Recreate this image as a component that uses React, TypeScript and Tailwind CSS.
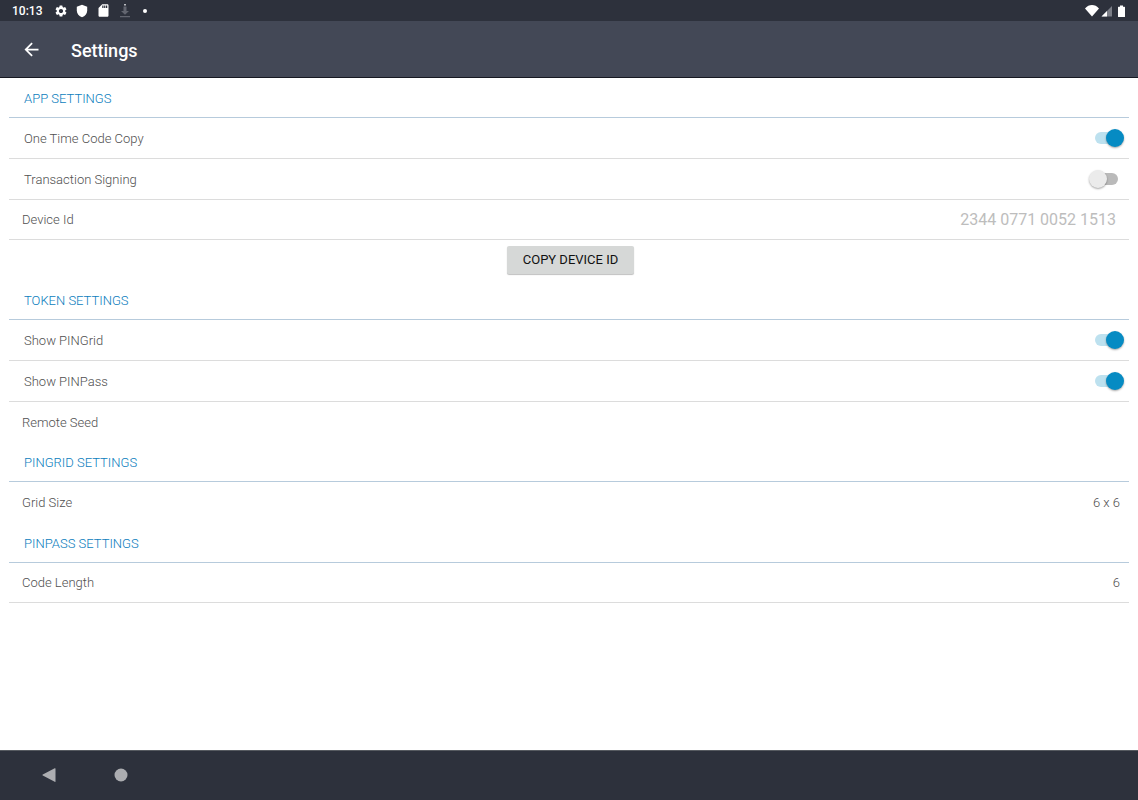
import { useState, type ReactNode } from "react";
import { MdArrowBack, MdSdCard, MdSettings } from "react-icons/md";

function StatusBar() {
  return (
    <div className="flex h-[21px] items-center justify-between bg-[#2d313c] px-3 text-white">
      <div className="flex items-center">
        <span className="w-[42px] text-[12px] leading-4 font-medium">10:13</span>
        <MdSettings className="size-[14px]" aria-hidden="true" />
        <svg className="ml-[7px] size-[14px]" viewBox="0 0 14 14" fill="currentColor" aria-hidden="true">
          <path d="M7 .7 1.8 2.8v3.7c0 3.200 2.200 5.800 5.200 6.800 3-1 5.200-3.600 5.200-6.800V2.800z" />
        </svg>
        <MdSdCard className="ml-[7px] size-[15px]" aria-hidden="true" />
        <svg className="ml-[7px] size-[14px] text-[#62656f]" viewBox="0 0 14 14" fill="currentColor" aria-hidden="true">
          <path d="M5.500 2.500h3V7h2.500L7 10.800 3 7h2.500zM2 12h10v1.300H2z" />
          <path d="M6 0h2v1.500H6z" fill="#b9bbc0" />
        </svg>
        <span className="ml-[11px] size-1 rounded-full bg-white" />
      </div>
      <svg className="h-[14px] w-[41px]" viewBox="0 0 41 14" fill="#fff" aria-hidden="true">
        <path d="M0 4.500C4-.1 10-.1 14 4.500L7 12.500z" />
        <path d="M27 2v10.500H16.500z" fill="#7b7e87" />
        <path d="M22 7v5.500h-5.500z" />
        <path d="M33.500 2.700h1.500V1.500h3v1.200h1.500q.5 0 .5.500v9.300q0 .5-.5.500h-6q-.5 0-.5-.5V3.200q0-.5.500-.5z" />
      </svg>
    </div>
  );
}

function SectionHeader({ children }: { children: ReactNode }) {
  return (
    <h2 className="flex h-10 items-center border-b border-[#b7cbdc] pt-0.5 pl-[15px] text-[#0b7dbd]">
      {children}
    </h2>
  );
}

function ToggleRow({ id, label, initial }: { id: string; label: string; initial: boolean }) {
  const [on, setOn] = useState(initial);
  return (
    <div className="flex h-[41px] items-center justify-between border-b border-[#dcdcdc] pr-1 pl-[15px]">
      <label htmlFor={id} className="pt-px">{label}</label>
      <span className="relative flex h-5 w-9 items-center">
        <input
          id={id}
          type="checkbox"
          role="switch"
          checked={on}
          onChange={(e) => setOn(e.target.checked)}
          className="peer absolute inset-0 z-10 cursor-pointer opacity-0"
        />
        <span className="ml-[2px] h-3 w-[27px] rounded-full bg-[#bababa] peer-checked:ml-[6px] peer-checked:bg-[#bde1ef]" />
        <span className="absolute left-0 size-[18px] rounded-full bg-[#ebebeb] shadow-[0_1px_2px_rgba(0,0,0,0.35)] peer-checked:left-[17px] peer-checked:bg-[#068bc3]" />
      </span>
    </div>
  );
}

function ValueRow({ label, children, line = true }: { label: string; children?: ReactNode; line?: boolean }) {
  return (
    <div className={`flex h-10 items-center justify-between pt-px pr-[9px] pl-[13px] ${line ? "border-b border-[#dcdcdc]" : ""}`}>
      <span>{label}</span>
      {children}
    </div>
  );
}

export default function App() {
  return (
    <div className="flex min-h-screen flex-col bg-white font-[Roboto,sans-serif] text-[13px] leading-4 font-light text-[#505050]">
      <StatusBar />
      <header className="flex h-[57px] items-center border-b border-[#171922] bg-[#434856] pt-px pl-[21px] text-white">
        <button type="button" aria-label="Back" className="mr-[29px] flex cursor-pointer">
          <MdArrowBack className="size-[21px]" />
        </button>
        <h1 className="pt-0.5 text-[18px] leading-6 font-medium">Settings</h1>
      </header>

      <main className="grow px-[9px]">
        <section>
          <SectionHeader>APP SETTINGS</SectionHeader>
          <ToggleRow id="code-copy" label="One Time Code Copy" initial={true} />
          <ToggleRow id="signing" label="Transaction Signing" initial={false} />
          <ValueRow label="Device Id">
            <span className="pr-1 text-[16px] font-normal text-[#bdbdbd]">2344 0771 0052 1513</span>
          </ValueRow>
          <div className="flex h-10 items-center justify-center pl-[3px]">
            <button
              type="button"
              className="h-7 cursor-pointer rounded-xs bg-[#d6d8d7] px-4 font-normal text-[#111] shadow-[0_1px_1px_rgba(0,0,0,0.25)]"
            >
              COPY DEVICE ID
            </button>
          </div>
        </section>
        <section>
          <SectionHeader>TOKEN SETTINGS</SectionHeader>
          <ToggleRow id="pingrid" label="Show PINGrid" initial={true} />
          <ToggleRow id="pinpass" label="Show PINPass" initial={true} />
          <ValueRow label="Remote Seed" line={false} />
        </section>
        <section>
          <SectionHeader>PINGRID SETTINGS</SectionHeader>
          <ValueRow label="Grid Size" line={false}>
            <span>6 x 6</span>
          </ValueRow>
        </section>
        <section className="pt-px">
          <SectionHeader>PINPASS SETTINGS</SectionHeader>
          <ValueRow label="Code Length">
            <span>6</span>
          </ValueRow>
        </section>
      </main>

      <nav className="flex h-[50px] items-center gap-[58px] border-t border-[#565a60] bg-[#2d313c] pb-0.5 pl-[42px] text-[#acadb1]">
        <button type="button" aria-label="Navigate back" className="flex cursor-pointer">
          <svg className="size-[14px]" viewBox="0 0 14 14" fill="currentColor" aria-hidden="true">
            <path d="M13.500 0.800v12.600q0 .8-.8.300L.8 7.600q-.8-.5 0-1L12.700.3q.8-.4.800.5z" />
          </svg>
        </button>
        <button type="button" aria-label="Home" className="flex cursor-pointer">
          <svg className="size-[14px]" viewBox="0 0 14 14" fill="currentColor" aria-hidden="true">
            <circle cx="7" cy="7" r="6.500" />
          </svg>
        </button>
      </nav>
    </div>
  );
}
